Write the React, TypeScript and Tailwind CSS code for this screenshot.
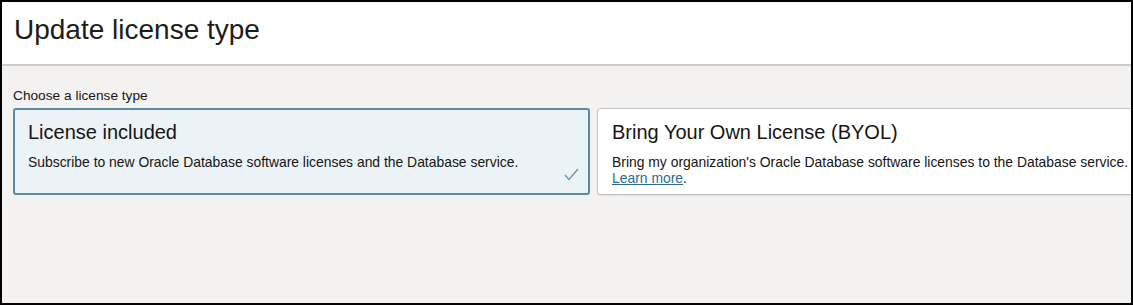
const CheckIcon = () => (
  <svg width="15" height="13" viewBox="0 0 15 13" fill="none">
    <path d="M1 7 L5 11.5 L14 1" stroke="#6b98ae" strokeWidth="1.4" />
  </svg>
);

const App = () => {
  return (
    <div className="w-[1133px] h-[305px] bg-black p-[2px] font-['Liberation_Sans',Arial,sans-serif]">
      <div className="flex h-full flex-col overflow-hidden bg-[#f3f2f1]">
        {/* Header */}
        <div className="flex h-[64px] shrink-0 items-center border-b-2 border-[#cbcbcb] bg-white pl-[12px] pb-[7px]">
          <h1 className="text-[28px] leading-none text-[#1d1c1a]">Update license type</h1>
        </div>

        {/* Body */}
        <div className="pl-[11px] pt-[22px]">
          <div className="text-[13.7px] leading-[16px] text-[#161513]">Choose a license type</div>

          <div className="mt-[4px] flex gap-[7px]">
            {/* Selected option */}
            <div className="relative h-[87px] w-[577px] shrink-0 rounded-[3px] border-2 border-[#5a8aa4] bg-[#ebf3f6] px-[13px] pt-[10px]">
              <div className="text-[20px] leading-[24px] text-[#161513]">License included</div>
              <div className="mt-[10px] text-[13.9px] leading-[16px] text-[#161513]">
                Subscribe to new Oracle Database software licenses and the Database service.
              </div>
              <div className="absolute right-[9px] bottom-[12px]">
                <CheckIcon />
              </div>
            </div>

            {/* Other option */}
            <div className="h-[87px] w-[577px] shrink-0 rounded-[3px] border border-[#c4c4c4] bg-white px-[14px] pt-[11px] shadow-[0_1px_1px_rgba(0,0,0,0.08)]">
              <div className="text-[20px] leading-[24px] text-[#161513]">Bring Your Own License (BYOL)</div>
              <div className="mt-[10px] whitespace-nowrap text-[13.9px] leading-[16px] text-[#161513]">
                Bring my organization's Oracle Database software licenses to the Database service.
              </div>
              <div className="text-[13.9px] leading-[16px] text-[#161513]">
                <a href="#" className="text-[#2c6a93] underline">Learn more</a>.
              </div>
            </div>
          </div>
        </div>
      </div>
    </div>
  );
};

export default App;
